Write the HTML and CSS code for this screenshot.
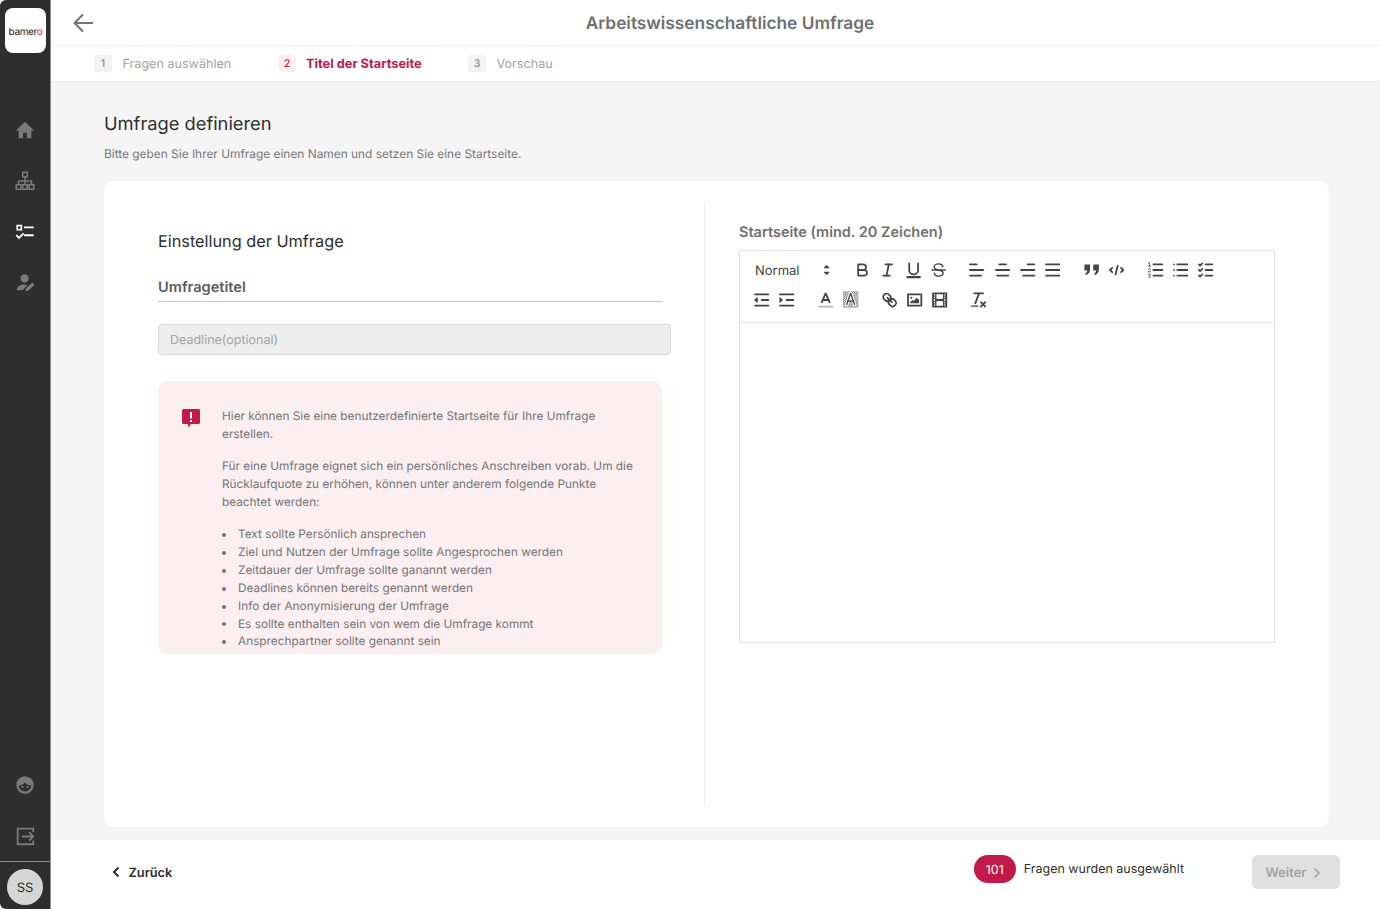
FILE: index.html
```html
<!DOCTYPE html>
<html lang="de">
<head>
    <meta charset="UTF-8">
    <title>Arbeitswissenschaftliche Umfrage</title>
    <link rel="stylesheet" href="styles.css">
</head>
<body>
<svg class="defs" width="0" height="0">
    <defs>
        <pattern id="hatch" width="2" height="2" patternUnits="userSpaceOnUse">
            <rect width="1" height="1" fill="#666"/>
            <rect x="1" y="1" width="1" height="1" fill="#666"/>
        </pattern>
    </defs>
</svg>
<div class="app">
    <aside class="sidebar">
        <div class="logo">bamer<span class="logo-o">o</span></div>
        <nav class="nav">
            <svg class="nav-icon" viewBox="0 0 24 24"><path d="M10 21v-6h4v6h5v-8.500h3L12 3 2 12.500h3V21z" fill="#7a7a7a"/></svg>
            <svg class="nav-icon" viewBox="0 0 24 24" fill="none" stroke="#7a7a7a" stroke-width="1.700"><rect x="9.500" y="2.500" width="5" height="5"/><rect x="2.500" y="16" width="5" height="5"/><rect x="9.500" y="16" width="5" height="5"/><rect x="16.500" y="16" width="5" height="5"/><path d="M12 7.500V16M5 16v-4h14v4"/></svg>
            <svg class="nav-icon" viewBox="0 0 24 24" fill="none" stroke="#fff"><rect x="3.500" y="5" width="4.500" height="4.500" stroke-width="1.800"/><path d="M11 7h10.500M11 15.500h10.500" stroke-width="2"/><path d="M2.500 15.500l3 3 5-5" stroke-width="2"/></svg>
            <svg class="nav-icon" viewBox="0 0 24 24"><circle cx="11.500" cy="7" r="4.500" fill="#7a7a7a"/><path d="M3 20c0-4 3-6.500 8-6.500 1.500 0 2.500.2 3.500.6L9.500 20z" fill="#7a7a7a"/><path d="M12.500 21l.5-3 7-6.500 2.500 2.500-7 6.500z" fill="#7a7a7a"/></svg>
        </nav>
        <div class="side-bottom">
            <svg class="nav-icon" viewBox="0 0 24 24"><path d="M12 2.500a9.500 9.500 0 1 0 0 19 9.500 9.500 0 0 0 0-19zm0 16.500c-3.600 0-6.500-2.700-6.900-6.200 3.200-.3 5.500-1.500 6.900-3.800 1.400 2.300 3.700 3.500 6.900 3.800-.4 3.500-3.300 6.200-6.900 6.200z" fill="#7a7a7a"/><circle cx="9.300" cy="14" r="1.200" fill="#7a7a7a"/><circle cx="14.700" cy="14" r="1.200" fill="#7a7a7a"/></svg>
            <svg class="nav-icon" viewBox="0 0 24 24" fill="none" stroke="#7a7a7a" stroke-width="2"><path d="M21 8V4H4v17h17v-4"/><path d="M8.500 12.500H21M16.500 8l4.500 4.500-4.500 4.500"/></svg>
        </div>
        <div class="avatar-row"><div class="avatar">SS</div></div>
    </aside>
    <div class="content">
        <header class="topbar">
            <svg class="back" viewBox="0 0 24 24" fill="none" stroke="#757575" stroke-width="2"><path d="M22 12H4M12 3.500L3.500 12l8.500 8.500"/></svg>
            <h1 class="page-title">Arbeitswissenschaftliche Umfrage</h1>
        </header>
        <div class="steps">
            <div class="step step-1"><span class="step-num">1</span><span class="step-label">Fragen auswählen</span></div>
            <div class="step step-2 current"><span class="step-num">2</span><span class="step-label">Titel der Startseite</span></div>
            <div class="step"><span class="step-num">3</span><span class="step-label">Vorschau</span></div>
        </div>
        <main class="main">
            <h2 class="main-title">Umfrage definieren</h2>
            <p class="main-sub">Bitte geben Sie Ihrer Umfrage einen Namen und setzen Sie eine Startseite.</p>
            <div class="card">
                <section class="col-left">
                    <h3 class="settings-title">Einstellung der Umfrage</h3>
                    <div class="field-title">Umfragetitel</div>
                    <div class="deadline">Deadline(optional)</div>
                    <div class="notice">
                        <svg class="notice-icon" viewBox="0 0 20 20"><path d="M2.500 1h15A1.500 1.500 0 0 1 19 2.500v12a1.500 1.500 0 0 1-1.500 1.500H10l-3 3.500V16H2.500A1.500 1.500 0 0 1 1 14.500v-12A1.500 1.500 0 0 1 2.500 1z" fill="#c2194b"/><path d="M9 4h2v6.500H9zM9 12h2v2H9z" fill="#fff"/></svg>
                        <div class="notice-text">
                            <p>Hier können Sie eine benutzerdefinierte Startseite für Ihre Umfrage erstellen.</p>
                            <p class="notice-second">Für eine Umfrage eignet sich ein persönliches Anschreiben vorab. Um die Rücklaufquote zu erhöhen, können unter anderem folgende Punkte beachtet werden:</p>
                            <ul>
                                <li>Text sollte Persönlich ansprechen</li>
                                <li>Ziel und Nutzen der Umfrage sollte Angesprochen werden</li>
                                <li>Zeitdauer der Umfrage sollte ganannt werden</li>
                                <li>Deadlines können bereits genannt werden</li>
                                <li>Info der Anonymisierung der Umfrage</li>
                                <li>Es sollte enthalten sein von wem die Umfrage kommt</li>
                                <li>Ansprechpartner sollte genannt sein</li>
                            </ul>
                        </div>
                    </div>
                </section>
                <section class="col-right">
                    <div class="editor-label">Startseite (mind. 20 Zeichen)</div>
                    <div class="toolbar">
                        <span class="tb-group tb-group-picker">
                            <span class="picker"><span class="picker-label">Normal</span><svg class="tb-icon" viewBox="0 0 18 18"><polygon points="7 11 9 13 11 11 7 11" class="fill"/><polygon points="7 7 9 5 11 7 7 7" class="fill"/></svg></span>
                        </span>
                        <span class="tb-group">
                            <svg class="tb-icon" viewBox="0 0 18 18"><path d="M5,4H9.500A2.500,2.500,0,0,1,12,6.500v0A2.500,2.500,0,0,1,9.500,9H5V4Z"/><path d="M5,9h5.500A2.500,2.500,0,0,1,13,11.500v0A2.500,2.500,0,0,1,10.500,14H5V9Z"/></svg>
                            <svg class="tb-icon" viewBox="0 0 18 18"><line x1="7" x2="13" y1="4" y2="4"/><line x1="5" x2="11" y1="14" y2="14"/><line x1="8" x2="10" y1="14" y2="4"/></svg>
                            <svg class="tb-icon" viewBox="0 0 18 18"><path d="M5,3V9a4,4,0,0,0,4,4H9a4,4,0,0,0,4-4V3"/><rect class="fill" height="1" rx=".5" width="12" x="3" y="15"/></svg>
                            <svg class="tb-icon thin" viewBox="0 0 18 18"><line x1="3" x2="15" y1="9" y2="9"/><path d="M12.800,6C12.400,4.400,10.900,3.500,9,3.500 6.500,3.500,5,4.800,5,6.300 5,7.800,6.300,8.500,9,9 11.700,9.500,13,10.200,13,11.700 13,13.200,11.500,14.500,9,14.500 7,14.500,5.500,13.600,5.200,12"/></svg>
                        </span>
                        <span class="tb-group">
                            <svg class="tb-icon" viewBox="0 0 18 18"><line x1="3" x2="15" y1="9" y2="9"/><line x1="3" x2="13" y1="14" y2="14"/><line x1="3" x2="9" y1="4" y2="4"/></svg>
                            <svg class="tb-icon" viewBox="0 0 18 18"><line x1="15" x2="3" y1="9" y2="9"/><line x1="14" x2="4" y1="14" y2="14"/><line x1="12" x2="6" y1="4" y2="4"/></svg>
                            <svg class="tb-icon" viewBox="0 0 18 18"><line x1="15" x2="3" y1="9" y2="9"/><line x1="15" x2="5" y1="14" y2="14"/><line x1="15" x2="9" y1="4" y2="4"/></svg>
                            <svg class="tb-icon" viewBox="0 0 18 18"><line x1="15" x2="3" y1="9" y2="9"/><line x1="15" x2="3" y1="14" y2="14"/><line x1="15" x2="3" y1="4" y2="4"/></svg>
                        </span>
                        <span class="tb-group">
                            <svg class="tb-icon" viewBox="0 0 18 18"><path class="solid" d="M2.500 4h5v4.500c0 2.500-1.300 4.300-3.700 5l-.6-1.300c1.200-.6 1.800-1.400 1.900-2.700H2.500zM10.500 4h5v4.500c0 2.500-1.300 4.300-3.700 5l-.6-1.300c1.200-.6 1.800-1.400 1.900-2.700h-2.600z"/></svg>
                            <svg class="tb-icon" viewBox="0 0 18 18"><polyline points="5 7 3 9 5 11"/><polyline points="13 7 15 9 13 11"/><line x1="10" x2="8" y1="5" y2="13"/></svg>
                        </span>
                        <span class="tb-group">
                            <svg class="tb-icon" viewBox="0 0 18 18"><line x1="7" x2="15" y1="4" y2="4"/><line x1="7" x2="15" y1="9" y2="9"/><line x1="7" x2="15" y1="14" y2="14"/><path class="tiny" d="M2.500 2.800l1-.6v3.300M2.500 5.500h2M2.300 8.200c.5-.7 2-.6 2 .3 0 .8-1.500 1.300-2 2.200h2.200M2.300 12.800h2l-1 1.200c1 0 1.300.5 1.100 1.100-.3.700-1.500.7-2.100.1"/></svg>
                            <svg class="tb-icon" viewBox="0 0 18 18"><line x1="6" x2="15" y1="4" y2="4"/><line x1="6" x2="15" y1="9" y2="9"/><line x1="6" x2="15" y1="14" y2="14"/><line x1="3" x2="3" y1="4" y2="4"/><line x1="3" x2="3" y1="9" y2="9"/><line x1="3" x2="3" y1="14" y2="14"/></svg>
                            <svg class="tb-icon" viewBox="0 0 18 18"><line x1="9" x2="15" y1="4" y2="4"/><polyline points="3 4 4 5 6 3"/><line x1="9" x2="15" y1="14" y2="14"/><polyline points="3 14 4 15 6 13"/><line x1="9" x2="15" y1="9" y2="9"/><polyline points="3 9 4 10 6 8"/></svg>
                        </span>
                        <span class="tb-group">
                            <svg class="tb-icon" viewBox="0 0 18 18"><line x1="3" x2="15" y1="14" y2="14"/><line x1="3" x2="15" y1="4" y2="4"/><line x1="9" x2="15" y1="9" y2="9"/><polyline class="fill" points="5 7 5 11 3 9 5 7"/></svg>
                            <svg class="tb-icon" viewBox="0 0 18 18"><line x1="3" x2="15" y1="14" y2="14"/><line x1="3" x2="15" y1="4" y2="4"/><line x1="9" x2="15" y1="9" y2="9"/><polyline class="fill" points="3 7 3 11 5 9 3 7"/></svg>
                        </span>
                        <span class="tb-group">
                            <svg class="tb-icon" viewBox="0 0 18 18"><line class="under" x1="3" x2="15" y1="15" y2="15"/><polyline points="5.500 11 9 3 12.500 11"/><line x1="11.630" x2="6.380" y1="9" y2="9"/></svg>
                            <svg class="tb-icon" viewBox="0 0 18 18"><rect x="2" y="1" width="14" height="15" fill="url(#hatch)" stroke="none"/><polyline points="5.500 13 9 3 12.500 13" class="halo"/><polyline points="5.500 13 9 3 12.500 13" class="hair"/><line x1="11.500" x2="6.500" y1="10" y2="10" class="hair"/></svg>
                        </span>
                        <span class="tb-group">
                            <svg class="tb-icon" viewBox="0 0 18 18"><line x1="7" x2="11" y1="7" y2="11"/><path d="M8.900,4.577a3.476,3.476,0,0,1,.36,4.679A3.476,3.476,0,0,1,4.577,8.900C3.185,7.500,2.035,6.400,4.217,4.217S7.500,3.185,8.900,4.577Z"/><path d="M13.423,9.100a3.476,3.476,0,0,0-4.679-.36,3.476,3.476,0,0,0,.36,4.679c1.392,1.392,2.500,2.542,4.679.36S14.815,10.500,13.423,9.100Z"/></svg>
                            <svg class="tb-icon" viewBox="0 0 18 18"><rect height="10" width="12" x="3" y="4"/><circle class="fill plain" cx="6" cy="7" r="1"/><polyline class="fill plain" points="5 12 5 11 7 9 8 10 11 7 13 9 13 12 5 12"/></svg>
                            <svg class="tb-icon" viewBox="0 0 18 18"><rect height="12" width="12" x="3" y="3"/><rect class="fill plain" height="12" width="1" x="5" y="3"/><rect class="fill plain" height="12" width="1" x="12" y="3"/><rect class="fill plain" height="2" width="8" x="5" y="8"/><rect class="fill plain" height="1" width="3" x="3" y="5"/><rect class="fill plain" height="1" width="3" x="3" y="7"/><rect class="fill plain" height="1" width="3" x="3" y="10"/><rect class="fill plain" height="1" width="3" x="3" y="12"/><rect class="fill plain" height="1" width="3" x="12" y="5"/><rect class="fill plain" height="1" width="3" x="12" y="7"/><rect class="fill plain" height="1" width="3" x="12" y="10"/><rect class="fill plain" height="1" width="3" x="12" y="12"/></svg>
                        </span>
                        <span class="tb-group">
                            <svg class="tb-icon" viewBox="0 0 18 18"><line x1="5" x2="13" y1="3" y2="3"/><line x1="6" x2="9.350" y1="12" y2="3"/><line x1="11" x2="15" y1="11" y2="15"/><line x1="15" x2="11" y1="11" y2="15"/><rect class="fill plain" height="1" rx=".5" width="7" x="2" y="14"/></svg>
                        </span>
                    </div>
                    <div class="editor-body"></div>
                </section>
            </div>
        </main>
        <footer class="footer">
            <div class="back-link">
                <svg class="chev" viewBox="0 0 10 12" fill="none" stroke="#2e2e2e" stroke-width="2"><path d="M7.500 1.500L3 6l4.500 4.500"/></svg>
                <span class="back-label">Zurück</span>
            </div>
            <div class="count">
                <span class="badge">101</span>
                <span class="count-text">Fragen wurden ausgewählt</span>
            </div>
            <div class="next-btn">Weiter
                <svg class="chev" viewBox="0 0 10 12" fill="none" stroke="#a3a3a3" stroke-width="1.600"><path d="M2.500 1.500L7 6l-4.500 4.500"/></svg>
            </div>
        </footer>
    </div>
</div>
</body>
</html>
```

FILE: styles.css
```css
* {
    margin: 0;
    padding: 0;
    box-sizing: border-box;
}

body {
    width: 1380px;
    height: 909px;
    overflow: hidden;
    font-family: Inter, "Liberation Sans", sans-serif;
    text-rendering: geometricPrecision;
    background-color: #fff;
    color: #2e2e2e;
}

.defs {
    display: block;
    height: 0;
}

.app {
    display: flex;
    height: 909px;
}

/* sidebar */
.sidebar {
    width: 51px;
    flex: none;
    display: flex;
    flex-direction: column;
    background-color: #2e2e2e;
    border-right: 1px solid #8c8c8c;
    border-radius: 6px 0 0 6px;
}

.logo {
    width: 41px;
    height: 45px;
    margin: 8px 0 0 5px;
    padding-top: 2px;
    display: flex;
    align-items: center;
    justify-content: center;
    background-color: #fff;
    border-radius: 8px;
    font-size: 10px;
    letter-spacing: -0.4px;
    color: #222;
}

.logo-o {
    color: #e0245e;
}

.nav {
    display: flex;
    flex-direction: column;
    align-items: center;
    gap: 29px;
    margin-top: 66px;
}

.nav-icon {
    width: 22px;
    height: 22px;
}

.side-bottom {
    margin-top: auto;
    display: flex;
    flex-direction: column;
    align-items: center;
    gap: 29px;
    padding-bottom: 14px;
}

.avatar-row {
    height: 48px;
    display: flex;
    justify-content: center;
    padding-top: 7px;
    border-top: 1px solid #8c8c8c;
}

.avatar {
    width: 36px;
    height: 36px;
    border-radius: 50%;
    background-color: #d6d6d6;
    color: #2e2e2e;
    font-size: 13px;
    line-height: 38px;
    text-align: center;
}

/* top */
.content {
    flex: 1;
    min-width: 0;
    display: flex;
    flex-direction: column;
}

.topbar {
    height: 46px;
    flex: none;
    display: flex;
    align-items: center;
    position: relative;
    border-bottom: 1px solid #f3f3f3;
}

.back {
    width: 24px;
    height: 24px;
    margin-left: 20px;
}

.page-title {
    position: absolute;
    left: 29px;
    right: 0;
    padding-top: 2px;
    text-align: center;
    font-size: 17.300px;
    font-weight: 600;
    color: #707070;
}

.steps {
    height: 36px;
    flex: none;
    display: flex;
    align-items: center;
    padding-left: 43px;
    font-size: 12.600px;
    color: #a3a3a3;
    border-bottom: 1px solid #f0f0f0;
}

.step {
    display: flex;
    align-items: center;
    gap: 10.500px;
}

.step-label {
    padding-top: 1px;
}

.step-1 {
    width: 184px;
}

.step-2 {
    width: 190px;
    gap: 10px;
    font-size: 12.800px;
}

.step-num {
    width: 18px;
    height: 17px;
    display: block;
    background-color: #f3f3f3;
    border-radius: 3px;
    font-size: 10.500px;
    font-weight: 500;
    line-height: 18px;
    text-align: center;
    color: #8a8a8a;
}

.current {
    color: #c2194b;
    font-weight: 700;
}

.current .step-num {
    background-color: #fbeef1;
    color: #c2194b;
}

/* main */
.main {
    flex: 1;
    min-height: 0;
    padding: 30px 51px 13px 53px;
    display: flex;
    flex-direction: column;
    background-color: #f5f5f5;
}

.main-title {
    font-size: 18.300px;
    font-weight: 400;
    line-height: 24px;
    color: #2e2e2e;
}

.main-sub {
    margin-top: 9px;
    font-size: 11.900px;
    line-height: 18px;
    color: #757575;
}

.card {
    flex: 1;
    margin-top: 18px;
    display: flex;
    padding: 21px 0;
    background-color: #fff;
    border-radius: 10px;
}

.col-left {
    width: 601px;
    padding: 28px 0 0 54px;
    border-right: 1px solid #ececec;
}

.settings-title {
    font-size: 16.300px;
    font-weight: 400;
    line-height: 22px;
    color: #2e2e2e;
}

.field-title {
    width: 504px;
    margin-top: 25px;
    padding-bottom: 4px;
    font-size: 14.600px;
    font-weight: 600;
    line-height: 20px;
    color: #5c5c5c;
    border-bottom: 1px solid #c4c4c4;
}

.deadline {
    width: 513px;
    height: 31px;
    margin-top: 22px;
    padding-left: 11px;
    background-color: #eeeeee;
    border: 1px solid #d9d9d9;
    border-radius: 4px;
    font-size: 12.500px;
    line-height: 31px;
    color: #a3a3a3;
}

.notice {
    width: 504px;
    height: 273px;
    margin-top: 26px;
    padding: 26px 20px 0 23px;
    display: flex;
    gap: 21px;
    overflow: hidden;
    background-color: #fbeff2;
    border-radius: 10px;
}

.notice-icon {
    width: 20px;
    height: 22px;
    flex: none;
}

.notice-text {
    font-size: 11.820px;
    line-height: 18px;
    color: #757575;
}

.notice-text p {
    margin-bottom: 14px;
}

.notice-text .notice-second {
    margin-bottom: 14px;
}

.notice-text ul {
    list-style: none;
    padding-top: 1px;
}

.notice-text li {
    display: flex;
    align-items: center;
    line-height: 17.900px;
}

.notice-text li::before {
    content: "";
    width: 4px;
    height: 4px;
    flex: none;
    margin-right: 12px;
    border-radius: 50%;
    background-color: #757575;
}

.col-right {
    flex: 1;
    padding: 21px 54px 0 34px;
}

.editor-label {
    font-size: 14.500px;
    font-weight: 600;
    line-height: 19px;
    color: #707070;
}

.toolbar {
    margin-top: 8px;
    padding: 4px 0 7px 9px;
    display: flex;
    flex-wrap: wrap;
    align-items: center;
    border: 1px solid #e2e2e2;
}

.tb-group {
    display: flex;
    height: 30px;
    align-items: center;
    margin-right: 13.300px;
}

.tb-group-picker {
    margin-right: 11px;
}

.picker {
    width: 90px;
    display: flex;
    align-items: center;
    justify-content: space-between;
    padding-left: 6px;
    font-size: 13px;
    color: #444;
}

.picker-label {
    padding-top: 2px;
}

.tb-icon {
    width: 25.300px;
    height: 20px;
    fill: none;
    stroke: #444;
    stroke-width: 1.600;
    stroke-linecap: round;
    stroke-linejoin: round;
}

.tb-icon .fill {
    fill: #444;
    stroke-width: 1;
}

.tb-icon .plain {
    stroke: none;
}

.tb-icon .solid {
    fill: #444;
    stroke: none;
}

.tb-icon .under {
    stroke: #b5b5b5;
}

.tb-icon .halo {
    stroke: #fff;
    stroke-width: 3;
}

.tb-icon .hair {
    stroke-width: 1.200;
}

.tb-icon .tiny {
    stroke-width: .7;
}

.thin {
    stroke-width: 1.300;
}

.editor-body {
    height: 320px;
    border: 1px solid #e2e2e2;
    border-top: 0;
}

/* footer */
.footer {
    height: 69px;
    flex: none;
    display: flex;
    align-items: center;
    padding: 0 40px 6px 60px;
}

.back-link {
    display: flex;
    align-items: center;
    gap: 7.500px;
    font-size: 12.800px;
    font-weight: 600;
    color: #2e2e2e;
}

.back-label {
    padding-top: 3px;
}

.chev {
    width: 10px;
    height: 12px;
}

.count {
    margin-left: auto;
    display: flex;
    align-items: center;
    gap: 8px;
    margin-right: 68px;
    transform: translateY(-3px);
}

.badge {
    width: 42px;
    height: 28px;
    display: block;
    background-color: #c2194b;
    border-radius: 14px;
    color: #fff;
    font-size: 12.500px;
    line-height: 31px;
    text-align: center;
}

.count-text {
    padding-top: 2px;
    font-size: 12.500px;
    color: #2e2e2e;
}

.next-btn {
    width: 88px;
    height: 34px;
    display: flex;
    align-items: center;
    justify-content: center;
    gap: 5px;
    padding: 2px 5px 0 0;
    background-color: #e0e0e0;
    border-radius: 6px;
    font-size: 13px;
    font-weight: 600;
    color: #a3a3a3;
}
```
